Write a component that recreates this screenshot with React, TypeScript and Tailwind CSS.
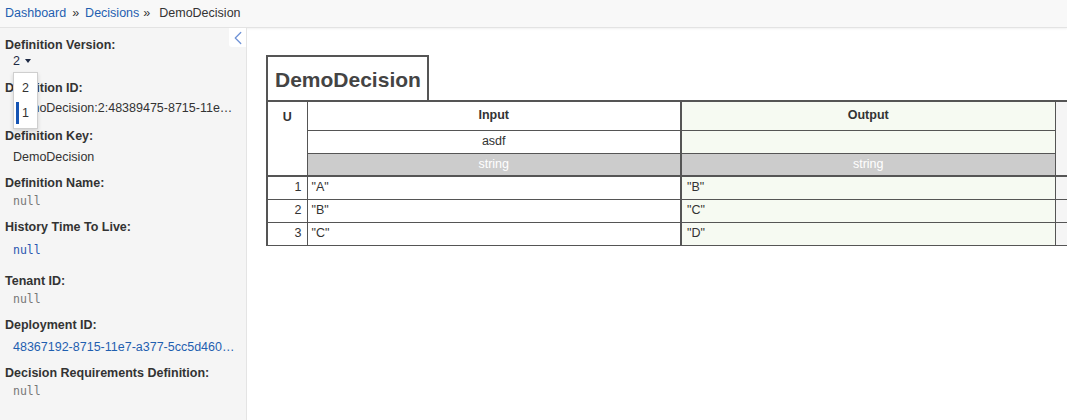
import { ChevronLeft } from "lucide-react"

const font = { fontFamily: '"Liberation Sans", Arial, sans-serif' }

const rows = [
  { id: 1, input: '"A"', output: '"B"' },
  { id: 2, input: '"B"', output: '"C"' },
  { id: 3, input: '"C"', output: '"D"' },
]

function Label({ children, className = "" }: { children: React.ReactNode; className?: string }) {
  return <div className={`font-bold text-[12.5px] leading-4 text-[#333] ${className}`}>{children}</div>
}

function Null({ className = "", blue = false }: { className?: string; blue?: boolean }) {
  return (
    <div
      className={`pl-2 text-[11.5px] leading-4 ${blue ? "text-[#2a56b0]" : "text-[#777]"} ${className}`}
      style={{ fontFamily: '"DejaVu Sans Mono", monospace' }}
    >
      null
    </div>
  )
}

export default function App() {
  return (
    <div className="w-[1067px] h-[420px] overflow-hidden bg-white flex flex-col text-[#333]" style={font}>
      {/* Breadcrumb */}
      <div className="h-[28px] shrink-0 bg-[#f8f8f8] border-b border-[#e3e3e3] shadow-[0_1px_2px_rgba(0,0,0,0.06)] flex items-center pl-[5px] text-[12.5px]">
        <span className="text-[#1f5fb0]">Dashboard</span>
        <span className="mx-[6px] text-[#333]">»</span>
        <span className="text-[#1f5fb0]">Decisions</span>
        <span className="ml-[4px] mr-[9px] text-[#333]">»</span>
        <span>DemoDecision</span>
      </div>

      <div className="flex flex-1 min-h-0">
        {/* Sidebar */}
        <div className="relative w-[247px] shrink-0 bg-[#f5f5f5] border-r border-[#e4e4e4] pl-[5px] pt-[9px] pr-[10px]">
          <button className="absolute right-0 top-0 w-[17px] h-[19px] bg-white flex items-center justify-center rounded-bl-[3px] overflow-visible">
            <ChevronLeft className="w-[22px] h-[22px] shrink-0 text-[#6f93d6]" strokeWidth={1.4} />
          </button>

          <Label>Definition Version:</Label>
          <div className="pl-2 mt-0 text-[12.5px] leading-4 text-[#1e2a44] flex items-center gap-[5px]">
            2
            <span className="w-0 h-0 border-l-[3.5px] border-r-[3.5px] border-t-[4px] border-l-transparent border-r-transparent border-t-[#1e2a44]" />
          </div>

          {/* version dropdown */}
          <div className="absolute left-[13px] top-[44px] w-[25px] h-[57px] bg-white border border-[#cfcfcf] shadow-[0_2px_4px_rgba(0,0,0,0.15)] z-10 text-[12.5px]">
            <div className="h-[24px] mt-[3px] flex items-center pl-[8px] text-[#333]">2</div>
            <div className="h-[22px] mt-[2px] flex items-center pl-[8px] text-[#333] relative">
              <span className="absolute left-[2px] top-0 w-[3px] h-[22px] bg-[#1554b4]" />
              1
            </div>
          </div>

          <Label className="mt-[11px]">Definition ID:</Label>
          <div className="pl-2 mt-[4px] text-[12.5px] leading-4 truncate">DemoDecision:2:48389475-8715-11e7-a377-5cc5d4604d15</div>

          <Label className="mt-[12px]">Definition Key:</Label>
          <div className="pl-2 mt-[5px] text-[12.5px] leading-4">DemoDecision</div>

          <Label className="mt-[10px]">Definition Name:</Label>
          <Null className="mt-[2px]" />

          <Label className="mt-[10px]">History Time To Live:</Label>
          <Null blue className="mt-[7px]" />

          <Label className="mt-[15px]">Tenant ID:</Label>
          <Null className="mt-[2px]" />

          <Label className="mt-[10px]">Deployment ID:</Label>
          <div className="pl-2 mt-[6px] text-[12.5px] leading-4 truncate text-[#1f5fb0]">48367192-8715-11e7-a377-5cc5d4604d15</div>

          <Label className="mt-[10px]">Decision Requirements Definition:</Label>
          <Null className="mt-[2px]" />
        </div>

        {/* Main */}
        <div className="flex-1 min-w-0 overflow-hidden pl-[19px] pt-[27px]">
          <div className="inline-flex items-center h-[45px] border-t-2 border-l-2 border-r-2 border-[#555] pl-[7px] pr-[6px] pt-[2px]">
            <span className="text-[21px] font-bold text-[#444]">DemoDecision</span>
          </div>
          <table className="border-collapse text-[12.5px] text-[#333] w-[900px] table-fixed">
            <colgroup>
              <col className="w-[40px]" />
              <col className="w-[374px]" />
              <col className="w-[374px]" />
              <col className="w-[112px]" />
            </colgroup>
            <thead>
              <tr className="h-[29px]">
                <th rowSpan={3} className="align-top pt-[6px] font-bold border-t-2 border-l-2 border-b-2 border-r border-[#555]">U</th>
                <th className="font-bold border-t-2 border-b border-[#555]">Input</th>
                <th className="font-bold border-t-2 border-b border-l-2 border-[#555] bg-[#f6faf2]">Output</th>
                <th rowSpan={3} className="border-t-2 border-b-2 border-l border-[#555] bg-[#f5f5f5]" />
              </tr>
              <tr className="h-[23px]">
                <td className="text-center border-b border-[#555]">asdf</td>
                <td className="border-b border-l-2 border-[#555] bg-[#f6faf2]" />
              </tr>
              <tr className="h-[23px]">
                <td className="text-center text-white bg-[#cccccc] border-b-2 border-[#555]">string</td>
                <td className="text-center text-white bg-[#cccccc] border-b-2 border-l-2 border-[#555]">string</td>
              </tr>
            </thead>
            <tbody>
              {rows.map(r => (
                <tr key={r.id} className="h-[23px]">
                  <td className="text-right pr-[5px] border-l-2 border-r border-b border-[#555]">{r.id}</td>
                  <td className="pl-[4px] border-b border-[#555]">{r.input}</td>
                  <td className="pl-[5px] border-b border-l-2 border-[#555] bg-[#f6faf2]">{r.output}</td>
                  <td className="border-b border-l border-[#555] bg-[#f5f5f5]" />
                </tr>
              ))}
            </tbody>
          </table>
        </div>
      </div>
    </div>
  )
}
